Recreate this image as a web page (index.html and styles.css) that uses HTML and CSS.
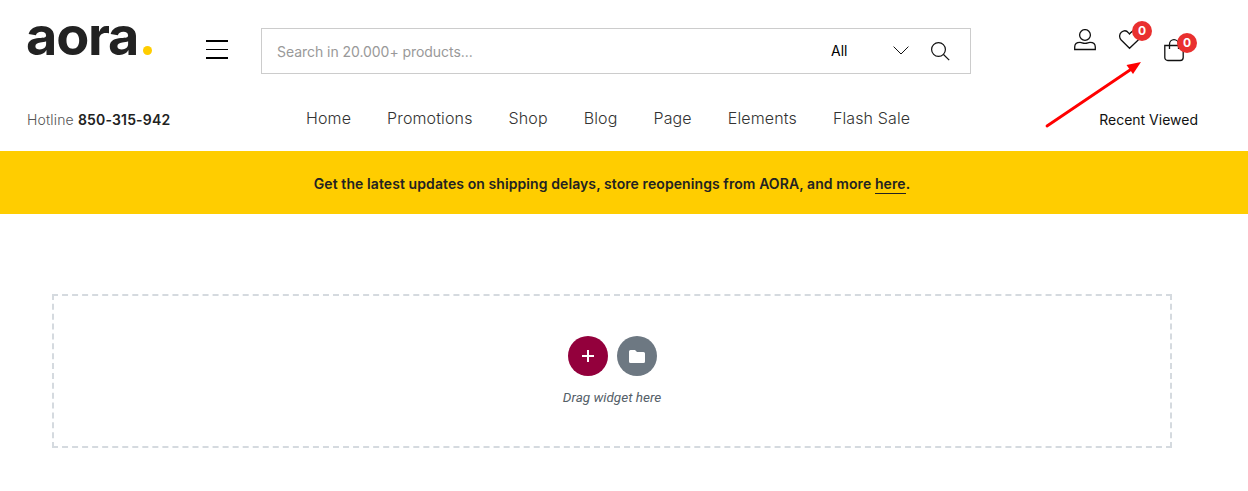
FILE: index.html
```html
<!DOCTYPE html>
<html lang="en">
<head>
<meta charset="utf-8">
<title>Aora</title>
<link rel="stylesheet" href="styles.css">
</head>
<body>
<header class="header">
  <div class="top-row">
    <a class="logo">aora<span class="logo-dot"></span></a>
    <button class="menu-toggle" aria-label="Menu"><span class="menu-line"></span><span class="menu-line"></span><span class="menu-line"></span></button>
    <form class="search">
      <span class="search-placeholder">Search in 20.000+ products...</span>
      <span class="search-category">All</span>
      <svg class="chevron" width="16" height="9" viewBox="0 0 16 9"><path d="M.6.6 8 8 15.400.6"/></svg>
      <svg class="search-icon" width="19" height="19" viewBox="0 0 19 19"><circle cx="7.500" cy="7.500" r="6.900"/><path d="m12.500 12.500 5.700 5.700"/></svg>
    </form>
    <div class="actions">
      <a class="action account"><svg width="22" height="22" viewBox="0 0 22 22"><circle cx="11" cy="6" r="5.400"/><path d="M.7 20.500V18C.7 15 3 13.400 6 13.400c1.800 0 2.600.9 5 .9s3.200-.9 5-.9c3 0 5.300 1.600 5.300 4.600v2.500z"/></svg></a>
      <a class="action wishlist"><svg width="22" height="20" viewBox="0 0 22 20"><path d="M10.500 18.300 2.200 10C-.1 7.500.2 3.900 2.600 2.100 5 .2 7.800.7 9.500 2.800L10.500 4l1.100-1.200C13.500.7 16.500.2 18.900 2.100c2.400 1.800 2.700 5.400.3 7.900z"/></svg><span class="badge">0</span></a>
      <a class="action cart"><svg width="20" height="23" viewBox="0 0 20 23"><path d="M.8 6.500h18.400v12a3 3 0 0 1-3 3H3.800a3 3 0 0 1-3-3zM5.500 10V5.200a4.500 4.500 0 0 1 9 0V10"/></svg><span class="badge">0</span></a>
    </div>
  </div>
  <div class="nav-row">
    <span class="hotline">Hotline <b>850-315-942</b></span>
    <nav class="nav"><a>Home</a><a>Promotions</a><a>Shop</a><a>Blog</a><a>Page</a><a>Elements</a><a>Flash Sale</a></nav>
    <a class="recent">Recent Viewed</a>
  </div>
  <svg class="arrow" width="100" height="70" viewBox="0 0 100 70"><path class="arrow-line" d="M7 66 90 10"/><path class="arrow-head" d="M101 2 86.500 5 89 8.500 93 14z"/></svg>
</header>
<div class="notice"><p>Get the latest updates on shipping delays, store reopenings from AORA, and more <a class="notice-link">here</a>.</p></div>
<main class="dropzone">
  <div class="drop-buttons">
    <button class="round add" aria-label="Add"><svg width="12" height="12" viewBox="0 0 12 12"><path d="M6 0v12M0 6h12"/></svg></button>
    <button class="round folder" aria-label="Templates"><svg width="16" height="13" viewBox="0 0 16 13"><path d="M1.500 0H6l2 2h6.500A1.500 1.500 0 0 1 16 3.500v8a1.500 1.500 0 0 1-1.500 1.500h-13A1.500 1.500 0 0 1 0 11.500v-10A1.500 1.500 0 0 1 1.500 0z"/></svg></button>
  </div>
  <p class="drop-text">Drag widget here</p>
</main>
</body>
</html>
```
FILE: styles.css
```css
* { box-sizing: border-box; }
body { margin: 0; background: #fff; color: #222; font-family: Inter, "Liberation Sans", sans-serif; overflow: hidden; }
p { margin: 0; }
button { border: 0; padding: 0; background: none; }
.header { position: relative; height: 151px; padding: 0 50px 0 27px; }
.top-row { display: flex; align-items: flex-start; height: 92px; }
.logo { display: flex; align-items: baseline; width: 180px; margin-left: -1px; padding-top: 3px; font-size: 54px; line-height: 65px; font-weight: 700; letter-spacing: -1.2px; }
.logo-dot { width: 9px; height: 9px; margin-left: 5px; border-radius: 50%; background: #ffcd00; }
.menu-toggle { display: grid; gap: 7px; width: 22px; margin: 40px 33px 0 0; }
.menu-line { height: 1.500px; background: #000; }
.search { display: flex; align-items: center; width: 710px; height: 46px; margin-top: 28px; padding: 0 20px 0 15px; border: 1px solid #ccc; font-size: 14px; }
.search-placeholder { flex: 1; color: #999; letter-spacing: -.05px; }
.search-category { width: 62px; color: #000; margin-top: -2px; }
.chevron { margin: -2px 22px 0 0; }
.search-icon { display: block; }
.chevron, .search-icon, .action svg { fill: none; stroke: #111; stroke-width: 1.200; }
.chevron { stroke-width: 1; }
.actions { display: flex; margin-left: auto; gap: 23px; padding-right: 14px; }
.action { position: relative; display: block; }
.action svg { display: block; stroke-width: 1.300; }
.account { margin-top: 29px; }
.wishlist { margin-top: 30px; }
.cart { margin-top: 39px; }
.badge { position: absolute; left: 13px; top: -9px; width: 20px; height: 20px; border-radius: 50%; background: #e9302f; color: #fff; font-size: 12px; line-height: 20px; font-weight: 700; text-align: center; }
.cart .badge { top: -6px; }
.nav-row { display: grid; grid-template-columns: 279px 1fr auto; align-items: center; height: 54px; font-size: 14px; }
.hotline { color: #555; font-weight: 300; letter-spacing: .16px; }
.hotline b { color: #222; font-weight: 600; }
.nav { display: flex; gap: 36px; margin-top: -3px; color: #333; font-size: 16px; font-weight: 300; letter-spacing: .13px; }
.recent { color: #111; }
.arrow { position: absolute; left: 1040px; top: 60px; overflow: visible; }
.arrow-line { stroke: #f00; stroke-width: 2.800; stroke-linecap: round; }
.arrow-head { fill: #f00; }
.notice { display: flex; justify-content: center; height: 63px; padding: 24px 24px 0 0; background: #ffcd00; font-size: 14px; line-height: 17px; font-weight: 600; letter-spacing: .085px; }
.notice-link { display: inline-block; border-bottom: 1px solid #222; line-height: 18px; }
.dropzone { display: flex; flex-direction: column; align-items: center; width: 1120px; height: 154px; margin: 80px 0 0 52px; padding-top: 40px; border: 2px dashed #d5dadf; }
.drop-buttons { display: flex; gap: 9px; }
.round { display: grid; place-items: center; width: 40px; height: 40px; border-radius: 50%; }
.add { background: #93003c; }
.add path { stroke: #fff; stroke-width: 2; }
.folder { background: #6d7882; }
.folder svg { fill: #fff; }
.drop-text { margin-top: 13px; color: #556068; font-family: Roboto, sans-serif; font-size: 13.5px; line-height: 17px; font-style: italic; }
```
